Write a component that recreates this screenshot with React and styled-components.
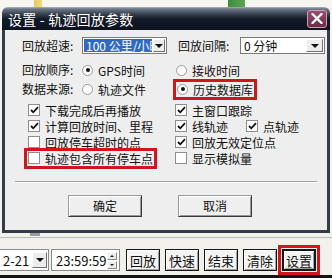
import React from 'react'
import styled, { createGlobalStyle } from 'styled-components'

//////// Style Variables ////////
const font = `"Noto Sans CJK SC", "DejaVu Sans", sans-serif`
const frameColor = '#363c47'
const faceColor = '#eeeeee'
const red = '#d0151d'

const GlobalStyle = createGlobalStyle`
    html, body {
        margin: 0;
        padding: 0;
        background: #f3f2ee;
    }
    body {
        font-family: ${font};
        font-size: 12px;
        color: #111;
    }
`

//////// Styled Components ////////
const Page = styled.div`
    width: 332px;
    height: 278px;
    overflow: hidden;
    display: flex;
    flex-direction: column;
    background: #f3f2ee;
`
const MapStrip = styled.div`
    height: 7px;
    background:
        linear-gradient(90deg, transparent 34px, #e8c860 34px, #f0d880 42px, transparent 42px),
        linear-gradient(90deg, transparent 228px, #3f8a3a 228px, #5aa850 245px, transparent 245px),
        #f7f5ef;
`
const Dialog = styled.div`
    width: 328px;
    margin-left: 2px;
    display: flex;
    flex-direction: column;
`
const TitleBar = styled.div`
    height: 23px;
    display: flex;
    align-items: center;
    justify-content: space-between;
    border-radius: 6px 6px 0 0;
    background: linear-gradient(180deg, #aab2bd 0px, #6c7787 2px, #39414f 7px, #141b28 12px, #0c1220 23px);
`
const Title = styled.div`
    padding-left: 6px;
    color: #fff;
    font-size: 14px;
    line-height: 16px;
    letter-spacing: 0.2px;
`
const CloseButton = styled.div`
    width: 20px;
    height: 18px;
    margin-right: 3px;
    box-sizing: border-box;
    border: 1px solid #c9a0b2;
    border-radius: 3px;
    background: linear-gradient(180deg, #9a4d6c, #6e2a47);
    display: flex;
    align-items: center;
    justify-content: center;
`
const Body = styled.div`
    background: ${faceColor};
    border: 3px solid ${frameColor};
    border-top: none;
    padding: 7px 0 13px 0;
    display: flex;
    flex-direction: column;
`
const Row = styled.div`
    display: flex;
    align-items: center;
    height: ${p => p.$h}px;
    margin-top: ${p => p.$mt || 0}px;
    padding-left: ${p => p.$pl}px;
`
const Label = styled.div`
    width: ${p => p.$w}px;
    margin-left: ${p => p.$ml || 0}px;
    line-height: 14px;
    white-space: nowrap;
`
const Select = styled.div`
    width: ${p => p.$w}px;
    height: 17px;
    box-sizing: border-box;
    border: 1px solid #7b7b7b;
    background: #fff;
    display: flex;
    align-items: center;
    padding: 0 1px;
    gap: 1px;
`
const SelectText = styled.div`
    flex: 1;
    white-space: nowrap;
    line-height: 13px;
    padding-left: 2px;
    ${p => (p.$selected ? 'height: 13px; overflow: hidden; background: #316ac5; color: #fff;' : 'color: #111;')}
`
const DropButton = styled.div`
    width: ${p => p.$w || 12}px;
    height: ${p => p.$h || 13}px;
    box-sizing: border-box;
    background: #ececec;
    border: 1px solid;
    border-color: #fff #707070 #707070 #fff;
    display: flex;
    align-items: center;
    justify-content: center;
    &::after {
        content: '';
        border-left: 4px solid transparent;
        border-right: 4px solid transparent;
        border-top: 4px solid #111;
    }
`
const Cell = styled.div`
    width: ${p => p.$w}px;
    display: flex;
    align-items: center;
`
const Option = styled.label`
    display: inline-flex;
    align-items: center;
    height: 13px;
    line-height: 13px;
    white-space: nowrap;
    outline: ${p => (p.$marked ? `3px solid ${red}` : 'none')};
    outline-offset: 1px;
`
const Radio = styled.span`
    width: 11px;
    height: 11px;
    box-sizing: border-box;
    border-radius: 50%;
    border: 1px solid #9a9a9a;
    background: #fff;
    margin-right: 5px;
    display: flex;
    align-items: center;
    justify-content: center;
    &::after {
        content: '';
        width: 4px;
        height: 4px;
        border-radius: 50%;
        background: ${p => (p.$on ? '#111' : 'transparent')};
    }
`
const Box = styled.span`
    width: 12px;
    height: 12px;
    box-sizing: border-box;
    border: 1px solid #8e8e8e;
    background: #fff;
    margin-right: 5px;
    display: flex;
    align-items: center;
    justify-content: center;
`
const Separator = styled.div`
    margin: 15px 10px 0;
    border-top: 1px solid #a2a2a2;
    border-bottom: 1px solid #fff;
`
const ButtonRow = styled.div`
    display: flex;
    gap: 36px;
    margin-top: 12px;
    padding-left: 63px;
`
const DialogButton = styled.div`
    width: 74px;
    height: 22px;
    box-sizing: border-box;
    border: 1px solid;
    border-color: #9a9a9a #3a3a3a #3a3a3a #9a9a9a;
    box-shadow: inset 1px 1px #fff, inset -1px -1px #9a9a9a;
    background: #efefef;
    display: flex;
    align-items: center;
    justify-content: center;
    line-height: 14px;
`
const TabStrip = styled.div`
    height: 4px;
    display: flex;
`
const Tab = styled.div`
    width: 10px;
    height: 3px;
    margin-left: 30px;
    background: #9c9c9c;
`
const Toolbar = styled.div`
    flex: 1;
    display: flex;
    align-items: center;
    border-top: 1px solid #b9b9b9;
    border-bottom: 3px solid #151515;
    padding: 11px 0 4px;
    background: #f1f0eb;
`
const Field = styled.div`
    width: ${p => p.$w}px;
    height: 22px;
    box-sizing: border-box;
    margin-left: ${p => p.$ml || 0}px;
    border: 1px solid #8a8a8a;
    border-left: ${p => (p.$cut ? 'none' : '1px solid #8a8a8a')};
    background: #fff;
    display: flex;
    align-items: center;
    padding: 2px 1px 2px ${p => p.$pl}px;
    font-size: 13px;
`
const FieldText = styled.div`
    flex: 1;
    line-height: 15px;
    white-space: nowrap;
`
const Spinner = styled.div`
    width: 15px;
    height: 17px;
    margin-right: 1px;
    display: flex;
    flex-direction: column;
    gap: 1px;
`
const SpinHalf = styled.div`
    flex: 1;
    box-sizing: border-box;
    background: #ececec;
    border: 1px solid;
    border-color: #fff #8a8a8a #8a8a8a #fff;
    display: flex;
    align-items: center;
    justify-content: center;
    &::after {
        content: '';
        border-left: 2px solid transparent;
        border-right: 2px solid transparent;
        ${p => (p.$up ? 'border-bottom: 2px solid #222;' : 'border-top: 2px solid #222;')}
    }
`
const ToolButtons = styled.div`
    display: flex;
    gap: 5px;
    margin-left: 6px;
`
const ToolButton = styled.div`
    width: 34px;
    height: 22px;
    box-sizing: border-box;
    border: ${p => (p.$default ? '2px' : '1px')} solid #161616;
    box-shadow: inset 1px 1px #fff, inset -1px -1px #a2a2a2;
    background: #f4f4f4;
    display: flex;
    align-items: center;
    justify-content: center;
    font-size: 13px;
    line-height: 15px;
    outline: ${p => (p.$marked ? `3px solid ${red}` : 'none')};
    outline-offset: 1px;
`

const Check = ({ on }) => (
    <Box>
        {on && (
            <svg width="9" height="8" viewBox="0 0 9 8">
                <path d="M1 4 L3.3 6.3 L8 1.2" fill="none" stroke="#111" strokeWidth="1.8" />
            </svg>
        )}
    </Box>
)

const CheckItem = ({ on, children, marked }) => (
    <Option $marked={marked}>
        <Check on={on} />
        {children}
    </Option>
)

const RadioItem = ({ on, children, marked }) => (
    <Option $marked={marked}>
        <Radio $on={on} />
        {children}
    </Option>
)

export default function App() {
    return (
        <Page>
            <GlobalStyle />
            <MapStrip />
            <Dialog>
                <TitleBar>
                    <Title>设置 - 轨迹回放参数</Title>
                    <CloseButton>
                        <svg width="12" height="11" viewBox="0 0 12 11">
                            <path d="M1.5 1 L10.5 10 M10.5 1 L1.5 10" stroke="#fff" strokeWidth="2.4" strokeLinecap="round" />
                        </svg>
                    </CloseButton>
                </TitleBar>
                <Body>
                    <Row $h={17} $pl={17}>
                        <Label $w={60}>回放超速:</Label>
                        <Select $w={85}>
                            <SelectText $selected>100 公里/小时</SelectText>
                            <DropButton />
                        </Select>
                        <Label $w={62} $ml={11}>回放间隔:</Label>
                        <Select $w={85}>
                            <SelectText>0 分钟</SelectText>
                            <DropButton $w={17} />
                        </Select>
                    </Row>
                    <Row $h={18} $mt={7} $pl={17}>
                        <Label $w={60}>回放顺序:</Label>
                        <Cell $w={94}><RadioItem on>GPS时间</RadioItem></Cell>
                        <Cell $w={100}><RadioItem>接收时间</RadioItem></Cell>
                    </Row>
                    <Row $h={18} $mt={1} $pl={17}>
                        <Label $w={60}>数据来源:</Label>
                        <Cell $w={95}><RadioItem>轨迹文件</RadioItem></Cell>
                        <Cell $w={100}><RadioItem on marked>历史数据库</RadioItem></Cell>
                    </Row>
                    <Row $h={16} $mt={4} $pl={23}>
                        <Cell $w={147}><CheckItem on>下载完成后再播放</CheckItem></Cell>
                        <Cell $w={100}><CheckItem on>主窗口跟踪</CheckItem></Cell>
                    </Row>
                    <Row $h={16} $pl={23}>
                        <Cell $w={147}><CheckItem on>计算回放时间、里程</CheckItem></Cell>
                        <Cell $w={71}><CheckItem on>线轨迹</CheckItem></Cell>
                        <Cell $w={70}><CheckItem on>点轨迹</CheckItem></Cell>
                    </Row>
                    <Row $h={16} $pl={23}>
                        <Cell $w={147}><CheckItem>回放停车超时的点</CheckItem></Cell>
                        <Cell $w={120}><CheckItem on>回放无效定位点</CheckItem></Cell>
                    </Row>
                    <Row $h={16} $pl={23}>
                        <Cell $w={147}><CheckItem marked>轨迹包含所有停车点</CheckItem></Cell>
                        <Cell $w={100}><CheckItem>显示模拟量</CheckItem></Cell>
                    </Row>
                    <Separator />
                    <ButtonRow>
                        <DialogButton>确定</DialogButton>
                        <DialogButton>取消</DialogButton>
                    </ButtonRow>
                </Body>
            </Dialog>
            <TabStrip>
                <Tab />
            </TabStrip>
            <Toolbar>
                <Field $w={49} $pl={3} $cut>
                    <FieldText>2-21</FieldText>
                    <DropButton $w={15} $h={16} />
                </Field>
                <Field $w={69} $pl={4} $ml={2}>
                    <FieldText>23:59:59</FieldText>
                    <Spinner>
                        <SpinHalf $up />
                        <SpinHalf />
                    </Spinner>
                </Field>
                <ToolButtons>
                    <ToolButton>回放</ToolButton>
                    <ToolButton>快速</ToolButton>
                    <ToolButton>结束</ToolButton>
                    <ToolButton>清除</ToolButton>
                    <ToolButton $default $marked>设置</ToolButton>
                </ToolButtons>
            </Toolbar>
        </Page>
    )
}
